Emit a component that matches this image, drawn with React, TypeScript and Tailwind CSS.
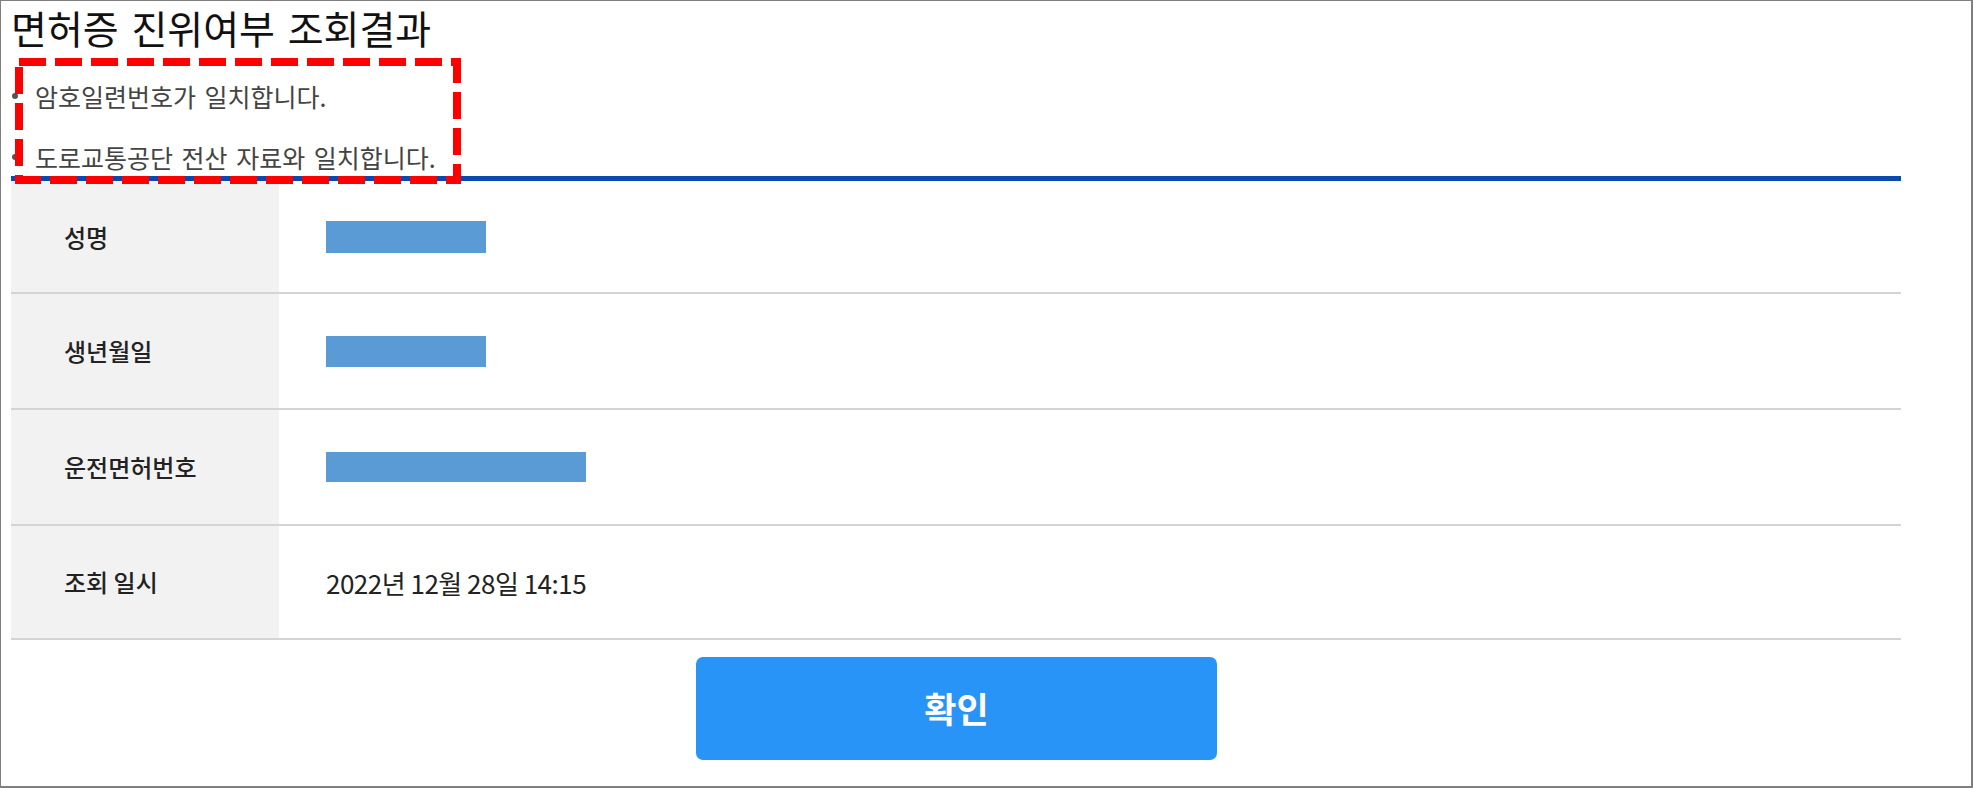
import React from "react";

type Row = {
  label: string;
  height: string;
  bar?: string;
  text?: string;
};

const rows: Row[] = [
  { label: "성명", height: "h-[111px]", bar: "w-[160px] h-[32px]" },
  { label: "생년월일", height: "h-[114px]", bar: "w-[160px] h-[31px]" },
  { label: "운전면허번호", height: "h-[114px]", bar: "w-[260px] h-[30px]" },
  { label: "조회 일시", height: "h-[112px]", text: "2022년 12월 28일 14:15" },
];

const notes = ["암호일련번호가 일치합니다.", "도로교통공단 전산 자료와 일치합니다."];

export default function App() {
  return (
    <div className="relative w-[1973px] h-[788px] overflow-hidden bg-white border-l border-t border-r-2 border-b-2 border-[#7f7f7f] font-['Noto_Sans_CJK_KR','Noto_Sans',sans-serif]">
      <div className="ml-[10px] w-[1890px] pt-[4px]">
        {/* title */}
        <h1 className="h-[44px] leading-[44px] text-[39px] font-normal text-[#111] [word-spacing:4px]">
          면허증 진위여부 조회결과
        </h1>

        {/* result notes */}
        <ul className="mt-[31px] flex flex-col gap-[29px]">
          {notes.map((n) => (
            <li key={n} className="flex items-center h-[32px]">
              <span className="size-[6px] rounded-full bg-[#555] ml-[1px]" />
              <span className="ml-[17px] text-[25px] leading-[32px] text-[#444] [word-spacing:3px]">
                {n}
              </span>
            </li>
          ))}
        </ul>

        {/* table */}
        <div className="mt-[3px] h-[5px] bg-[#0b4aad]" />
        <div className="flex flex-col">
          {rows.map((r) => (
            <div
              key={r.label}
              className={`flex ${r.height} box-content border-b-2 border-[#d4d4d4]`}
            >
              <div className="w-[268px] bg-[#f2f2f2] flex items-center pl-[53px] text-[24px] font-medium text-[#222]">
                {r.label}
              </div>
              <div className="flex-1 flex items-center pl-[47px]">
                {r.bar && <div className={`${r.bar} bg-[#5b9bd5]`} />}
                {r.text && (
                  <span className="text-[26px] tracking-[-0.5px] text-[#222]">
                    {r.text}
                  </span>
                )}
              </div>
            </div>
          ))}
        </div>

        {/* confirm */}
        <button className="mt-[17px] ml-[685px] w-[521px] h-[103px] rounded-[7px] bg-[#2994f7] text-white text-[35px] font-semibold">
          확인
        </button>
      </div>

      {/* red dashed annotation */}
      <svg
        className="absolute left-[14px] top-[57px]"
        width="446"
        height="126"
        viewBox="0 0 446 126"
      >
        <rect
          x="4"
          y="4"
          width="438"
          height="118"
          fill="none"
          stroke="#ff0000"
          strokeWidth="8"
          strokeDasharray="27 9"
        />
      </svg>
    </div>
  );
}
